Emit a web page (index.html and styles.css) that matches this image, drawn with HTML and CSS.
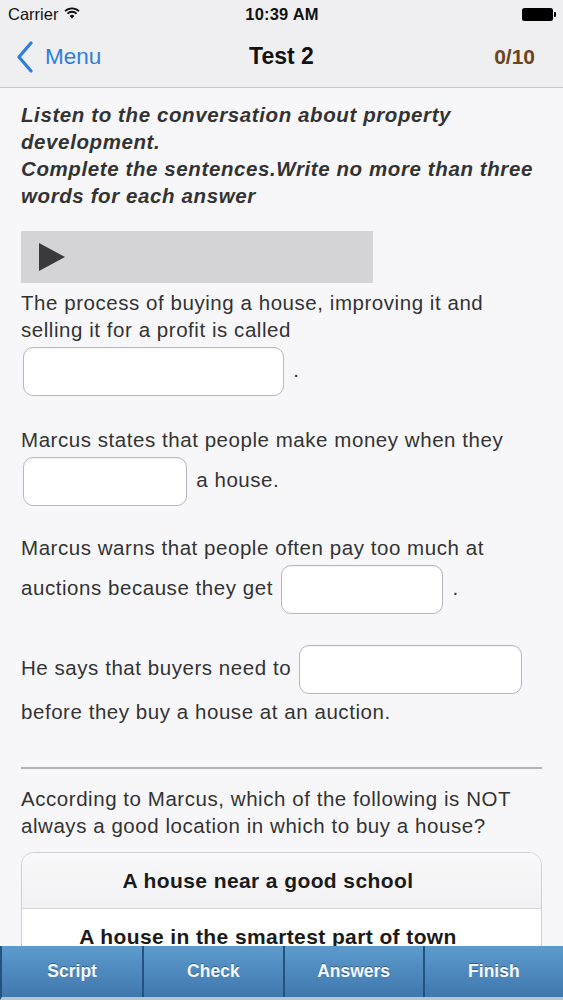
FILE: index.html
```html
<!DOCTYPE html>
<html>
<head>
<meta charset="utf-8">
<link rel="stylesheet" href="styles.css">
</head>
<body>
<header class="top">
  <div class="status">
    <div class="carrier">Carrier
      <svg class="wifi" width="16" height="12" viewBox="0 0 16 12">
        <path d="M1 4.2 A10 10 0 0 1 15 4.2" fill="none" stroke="#111" stroke-width="1.8"/>
        <path d="M3.4 6.6 A6.6 6.6 0 0 1 12.6 6.6" fill="none" stroke="#111" stroke-width="1.8"/>
        <path d="M8 11.5 L5.6 9 A3.4 3.4 0 0 1 10.4 9 Z" fill="#111"/>
      </svg>
    </div>
    <div class="time">10:39 AM</div>
    <div class="battery"><span class="cell"></span><span class="nub"></span></div>
  </div>
  <nav class="navbar">
    <div class="back">
      <svg width="18" height="32" viewBox="0 0 18 32"><path d="M15 2 L3 16 L15 30" fill="none" stroke="#2b7fdb" stroke-width="3.2" stroke-linecap="round" stroke-linejoin="round"/></svg>
      <span>Menu</span>
    </div>
    <div class="title">Test 2</div>
    <div class="score">0/10</div>
  </nav>
</header>

<main class="content">
  <p class="instructions">Listen to the conversation about property development.<br>Complete the sentences.Write no more than three words for each answer</p>

  <div class="player">
    <svg width="26" height="28" viewBox="0 0 26 28"><path d="M0 0 L26 14 L0 28 Z" fill="#3a393c"/></svg>
  </div>

  <p class="q first">The process of buying a house, improving it and selling it for a profit is called <span class="field w1"></span> .</p>
  <p class="q second">Marcus states that people make money when they <span class="field w2"></span> a house.</p>
  <p class="q">Marcus warns that people often pay too much at auctions because they get <span class="field w3"></span> .</p>
  <p class="q fourth">He says that buyers need to <span class="field w4"></span> before they buy a house at an auction.</p>

  <hr class="sep">

  <p class="q mc">According to Marcus, which of the following is NOT always a good location in which to buy a house?</p>

  <div class="options">
    <div class="opt opt-a">A house near a good school</div>
    <div class="opt">A house in the smartest part of town</div>
    <div class="opt">A house on a busy main road</div>
  </div>
</main>

<footer class="tabbar">
  <div class="tab">Script</div>
  <div class="tab">Check</div>
  <div class="tab">Answers</div>
  <div class="tab">Finish</div>
</footer>
</body>
</html>
```

FILE: styles.css
```css
* { box-sizing: border-box; }
html, body { margin: 0; padding: 0; }
body {
  font-family: "Liberation Sans", Arial, sans-serif;
  background: #f7f7f9;
  color: #333;
  width: 563px;
  overflow: hidden;
  height: 1000px;
}
.top {
  background: #efeff1;
  border-bottom: 1px solid #c9c9cc;
}
.status {
  height: 28px;
  display: flex;
  align-items: center;
  justify-content: space-between;
  padding: 0 7px 0 8px;
  font-size: 16.5px;
  color: #111;
}
.carrier { display: flex; align-items: center; gap: 6px; width: 120px; }
.wifi { margin-top: -2px; }
.time { font-weight: 600; font-size: 16.5px; letter-spacing: 0.2px; }
.battery { display: flex; align-items: center; width: 120px; justify-content: flex-end; }
.battery .cell { width: 31px; height: 13px; background: #000; border-radius: 2.5px; }
.battery .nub { width: 2px; height: 5px; background: #000; border-radius: 0 1px 1px 0; margin-left: 1px; }
.navbar {
  height: 59px;
  display: flex;
  align-items: center;
  justify-content: space-between;
  padding: 0 28px 2px 16px;
}
.back { display: flex; align-items: center; gap: 11px; color: #2b7fdb; font-size: 22.5px; width: 120px; }
.back svg { margin-top: 1px; }
.title {
  font-weight: 700;
  font-size: 23px;
  color: #111;
  flex: 1;
  text-align: center;
  padding-left: 12px;
}
.score { width: 120px; text-align: right; font-weight: 700; font-size: 21px; color: #6b4420; }

.content { padding: 13px 21px 120px 21px; }
.instructions {
  margin: 0;
  font-weight: 700;
  font-style: italic;
  font-size: 20.5px;
  letter-spacing: 0.6px;
  line-height: 27px;
  color: #333;
}
.player {
  margin-top: 22px;
  width: 352px;
  height: 52px;
  background: #d4d3d6;
  display: flex;
  align-items: center;
  padding-left: 18px;
}
.q {
  margin: 24px 0 0 0;
  font-size: 20.5px;
  letter-spacing: 0.55px;
  line-height: 27px;
  color: #333;
}
.q.first { margin-top: 6px; }
.q.second { margin-top: 26px; }
.q.fourth { margin-top: 23px; }
.field {
  display: inline-block;
  vertical-align: middle;
  height: 49px;
  margin: 4px 3px 4px 2px;
  background: #fff;
  border: 1.5px solid #b8b8ba;
  border-radius: 10px;
  box-shadow: inset 0 1px 1px rgba(0,0,0,0.05);
}
.w1 { width: 261px; }
.w2 { width: 164px; }
.w3 { width: 162px; }
.w4 { width: 223px; }
.sep {
  margin: 42px 0 0 0;
  border: none;
  border-top: 2px solid #b4b4b6;
}
.q.mc { margin-top: 16px; }
.options {
  margin-top: 13px;
  border: 1px solid #d0d0d3;
  border-radius: 13px;
  background: #fff;
  overflow: hidden;
}
.opt {
  height: 56px;
  display: flex;
  align-items: center;
  justify-content: center;
  padding-right: 27px;
  font-weight: 700;
  font-size: 21px;
  letter-spacing: 0.4px;
  color: #1a1a1a;
  border-top: 1px solid #d8d8da;
}
.opt-a { border-top: none; background: linear-gradient(#f9f9fa, #f1f1f3); height: 55px; }

.tabbar {
  position: fixed;
  left: 0;
  bottom: 0;
  width: 563px;
  height: 54px;
  display: grid;
  grid-template-columns: repeat(4, 1fr);
  background: linear-gradient(#5d9bce, #3f77ac);
  border-left: 2px solid #24527f;
  border-bottom: 3px solid #b9c4cf;
}
.tab {
  display: flex;
  align-items: center;
  justify-content: center;
  color: #f4f8fc;
  font-weight: 700;
  font-size: 17.5px;
  text-shadow: 0 -1px 0 rgba(0,0,0,0.35);
  border-left: 2px solid #24527f;
}
.tab:first-child { border-left: none; }
```
